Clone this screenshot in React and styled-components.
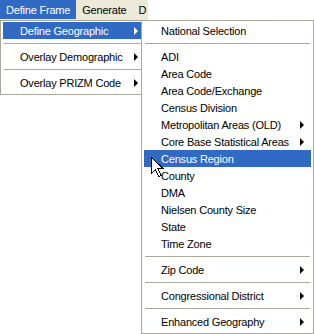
import React from 'react';
import styled, { createGlobalStyle } from 'styled-components';

const GlobalStyle = createGlobalStyle`
  html, body {
    margin: 0;
    padding: 0;
    background: #ffffff;
  }
  body {
    font-family: 'Liberation Sans', Arial, sans-serif;
    font-size: 11px;
    letter-spacing: -0.2px;
    color: #000000;
  }
`;

const barItems = [
  { label: 'Define Frame', active: true },
  { label: 'Generate' },
  { label: 'D' },
];

const frameItems = [
  { label: 'Define Geographic', sub: true, active: true },
  { sep: true },
  { label: 'Overlay Demographic', sub: true },
  { sep: true },
  { label: 'Overlay PRIZM Code', sub: true },
];

const geoItems = [
  { label: 'National Selection' },
  { sep: true },
  { label: 'ADI' },
  { label: 'Area Code' },
  { label: 'Area Code/Exchange' },
  { label: 'Census Division' },
  { label: 'Metropolitan Areas (OLD)', sub: true },
  { label: 'Core Base Statistical Areas', sub: true },
  { label: 'Census Region', active: true },
  { label: 'County' },
  { label: 'DMA' },
  { label: 'Nielsen County Size' },
  { label: 'State' },
  { label: 'Time Zone' },
  { sep: true },
  { label: 'Zip Code', sub: true },
  { sep: true },
  { label: 'Congressional District', sub: true },
  { sep: true },
  { label: 'Enhanced Geography', sub: true },
];

function Menu({ items, width, overlap }) {
  return (
    <SCMenu $width={width} $overlap={overlap}>
      {items.map((it, i) =>
        it.sep ? (
          <SCSeparator key={i} />
        ) : (
          <SCItem key={i} $active={it.active}>
            <span>{it.label}</span>
            {it.sub && <SCArrow $active={it.active} />}
          </SCItem>
        )
      )}
    </SCMenu>
  );
}

function App() {
  return (
    <>
      <GlobalStyle />
      <SCPage>
        <SCBar>
          {barItems.map((b) => (
            <SCBarItem key={b.label} $active={b.active}>{b.label}</SCBarItem>
          ))}
        </SCBar>
        <SCMenus>
          <Menu items={frameItems} width={148} />
          <Menu items={geoItems} width={173} overlap={7} />
          <SCCursor width="13" height="21" viewBox="0 0 13 21">
            <path
              d="M0.5 0.5 L0.5 16.5 L4.5 12.5 L7.5 19.5 L10 18.5 L7 11.5 L12 11.5 Z"
              fill="#ffffff"
              stroke="#000000"
              strokeWidth="1"
              shapeRendering="crispEdges"
            />
          </SCCursor>
        </SCMenus>
      </SCPage>
    </>
  );
}

const SCPage = styled.div`
  width: 314px;
  height: 334px;
  overflow: hidden;
  background: #ffffff;
`;

const SCBar = styled.div`
  display: flex;
  height: 20px;
  width: 148px;
  overflow: hidden;
  background: #ece9d8;
`;

const SCBarItem = styled.div`
  display: flex;
  align-items: center;
  height: 19px;
  padding: 0 6px;
  background: ${(p) => (p.$active ? '#316ac5' : 'transparent')};
  color: ${(p) => (p.$active ? '#ffffff' : '#000000')};
  white-space: nowrap;
`;

const SCMenus = styled.div`
  position: relative;
  display: flex;
  align-items: flex-start;
`;

const SCMenu = styled.div`
  position: relative;
  box-sizing: border-box;
  flex-shrink: 0;
  width: ${(p) => p.$width}px;
  margin-left: ${(p) => (p.$overlap ? -p.$overlap : 0)}px;
  display: flex;
  flex-direction: column;
  padding: 1px 2px 3px 2px;
  border: 1px solid #aca899;
  background: #ffffff;
`;

const SCItem = styled.div`
  display: flex;
  align-items: center;
  justify-content: space-between;
  height: 17px;
  padding: 0 7px 0 17px;
  background: ${(p) => (p.$active ? '#316ac5' : 'transparent')};
  color: ${(p) => (p.$active ? '#ffffff' : '#000000')};
  white-space: nowrap;
`;

const SCArrow = styled.i`
  width: 0;
  height: 0;
  border-top: 4px solid transparent;
  border-bottom: 4px solid transparent;
  border-left: 4px solid ${(p) => (p.$active ? '#ffffff' : '#000000')};
`;

const SCSeparator = styled.div`
  height: 9px;
  display: flex;
  align-items: center;
  &::before {
    content: '';
    flex: 1;
    margin: 0 1px;
    height: 1px;
    background: #aca899;
  }
`;

const SCCursor = styled.svg`
  position: absolute;
  left: 151px;
  top: 137px;
`;

export default App;
